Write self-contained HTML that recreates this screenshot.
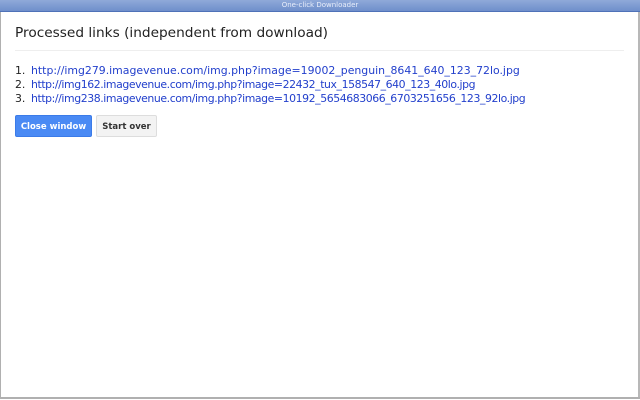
<!DOCTYPE html>
<html><head><meta charset="utf-8"><style>
html,body{margin:0;padding:0;width:640px;height:400px;overflow:hidden;background:#fff;font-family:"DejaVu Sans","Liberation Sans",sans-serif;}
.tb{position:absolute;left:0;top:0;width:640px;height:11px;background:linear-gradient(#8fa9d9,#6f8fcb);border-bottom:1px solid #4f72b8;}
.tb span{position:absolute;left:0;right:0;top:1px;text-align:center;font-size:7px;color:#e8eefa;}
.lb{position:absolute;left:0;top:12px;width:1px;height:386px;background:#b0b0b0;}
.rb{position:absolute;left:638px;top:12px;width:2px;height:386px;background:#b8b8b8;}
.bb{position:absolute;left:0;top:397px;width:640px;height:2px;background:#b0b0b0;}
h1{position:absolute;left:15px;top:25px;margin:0;font-size:13.7px;font-weight:normal;color:#222;}
.hr{position:absolute;left:15px;top:50px;width:609px;height:1px;background:#eee;}
.l{position:absolute;left:15px;font-size:10.9px;color:#222;white-space:nowrap;}
.l a{color:#2340cc;text-decoration:none;position:absolute;left:16px;top:0;}
.b{position:absolute;top:115px;height:22px;line-height:22px;font-size:8.5px;font-weight:bold;text-align:center;border-radius:2px;box-sizing:border-box;}
.b1{left:15px;width:77px;background:#4a8af4;color:#fff;border:1px solid #3b7be8;}
.b2{left:96px;width:61px;background:#f3f3f3;color:#333;border:1px solid #ddd;}
</style></head><body>
<div class="tb"><span>One-click Downloader</span></div>
<div class="lb"></div><div class="rb"></div><div class="bb"></div>
<h1>Processed links (independent from download)</h1>
<div class="hr"></div>
<div class="l" style="top:64px">1. <a>http://img279.imagevenue.com/img.php?image=19002_penguin_8641_640_123_72lo.jpg</a></div>
<div class="l" style="top:78px">2. <a style="letter-spacing:-0.42px">http://img162.imagevenue.com/img.php?image=22432_tux_158547_640_123_40lo.jpg</a></div>
<div class="l" style="top:92px">3. <a style="letter-spacing:-0.42px">http://img238.imagevenue.com/img.php?image=10192_5654683066_6703251656_123_92lo.jpg</a></div>
<div class="b b1">Close window</div>
<div class="b b2">Start over</div>
</body></html>
